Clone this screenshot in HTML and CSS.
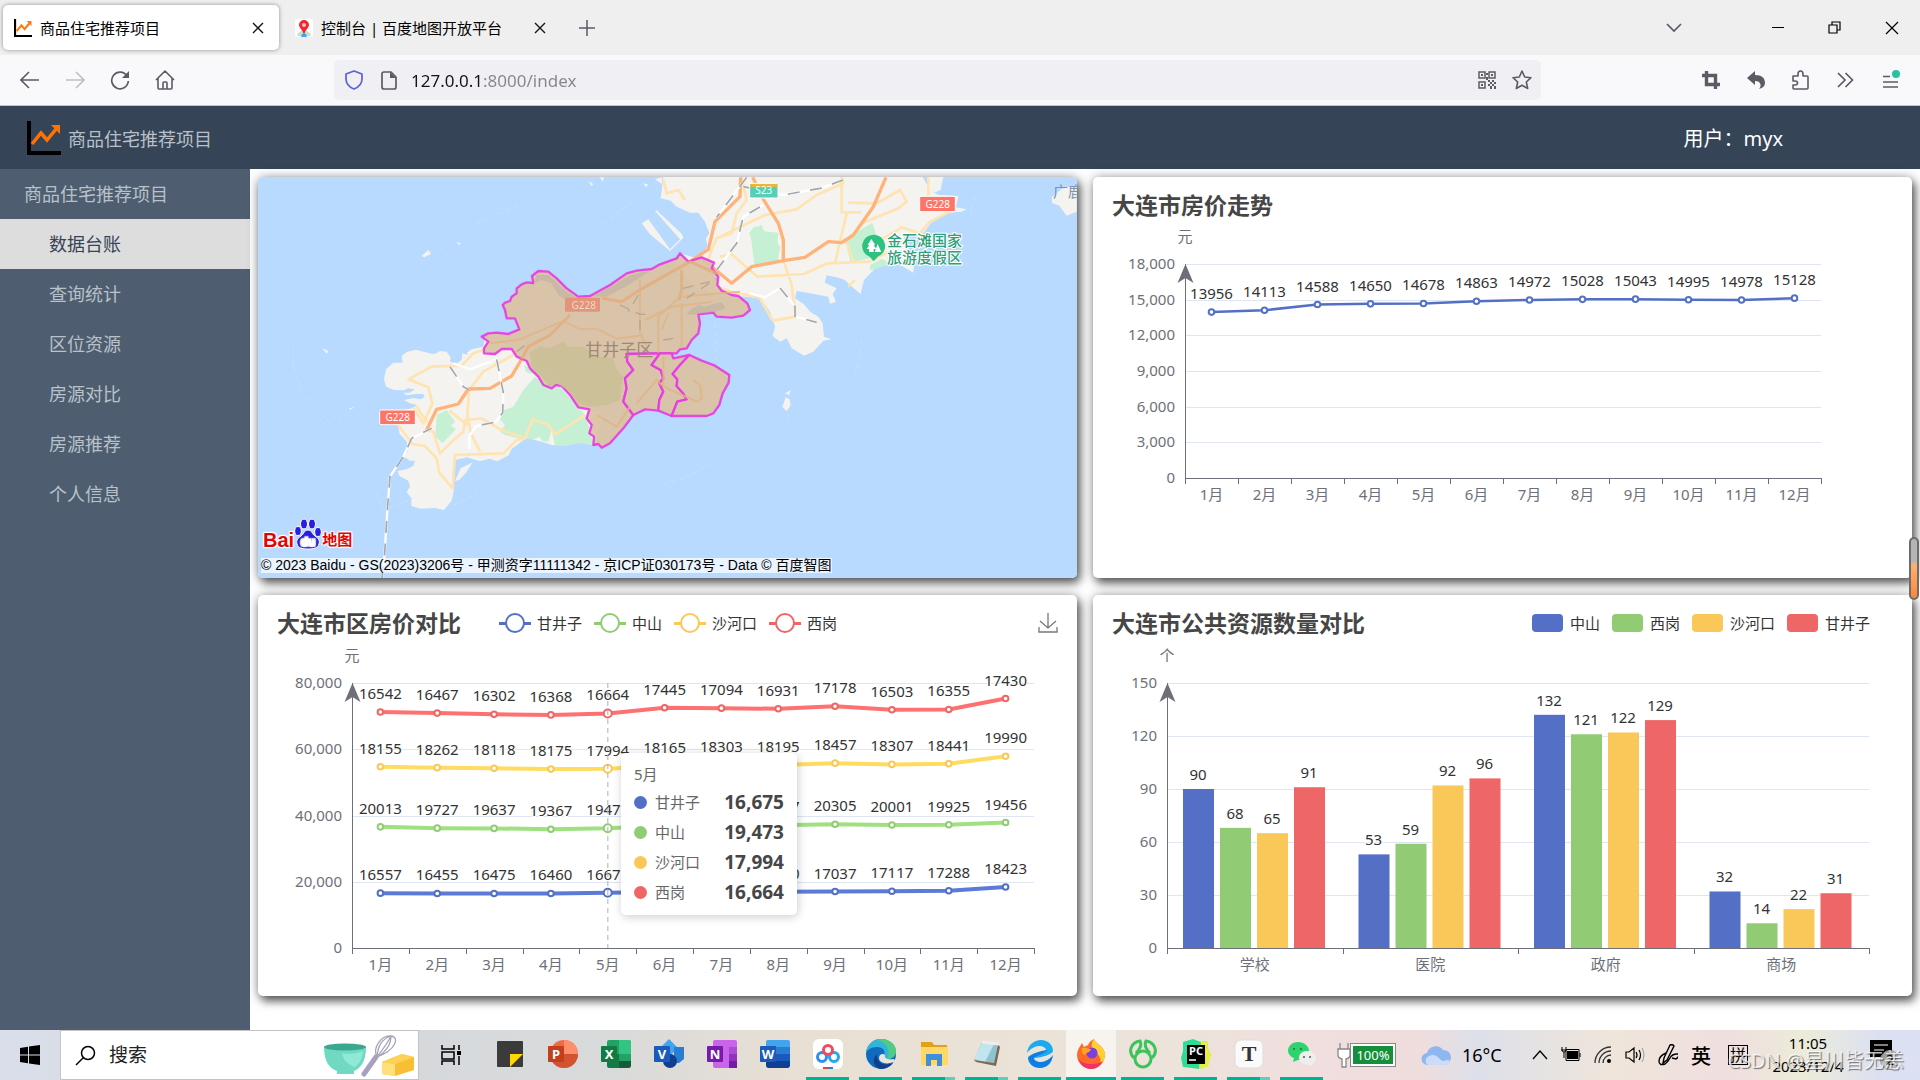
FILE: index.html
```html
<!DOCTYPE html>
<html lang="zh-CN">
<head>
    <meta charset="UTF-8">
    <title>商品住宅推荐项目</title>
    <link rel="stylesheet" href="styles.css">
</head>
<body>
<!-- 浏览器标签栏 -->
<div class="tabs">
    <div class="tab active">
        <svg class="favicon" viewBox="0 0 34 34"><path d="M2 0v32h32" fill="none" stroke="#000" stroke-width="4"/><path d="M5 23L14 12l6 7L30 7" fill="none" stroke="#ff7a0c" stroke-width="4"/><path d="M24 4h9v9z" fill="#ff7a0c"/></svg>
        <span class="tab-title">商品住宅推荐项目</span>
        <button class="tab-close" aria-label="关闭"><svg width="12" height="12" viewBox="0 0 12 12"><path d="M1 1l10 10M11 1L1 11" stroke="#15141a" stroke-width="1.4"/></svg></button>
    </div>
    <div class="tab">
        <svg class="favicon" viewBox="0 0 18 18"><rect width="18" height="18" rx="4" fill="#fff"/><path d="M2 15l4-3h6l4 3-1 2H3z" fill="#bfe3c8"/><path d="M7 15h4l1 3H6z" fill="#4aa3f0"/><path d="M9 1a5 5 0 0 1 5 5c0 3-4 5-4.500 9h-1C8 11 4 9 4 6a5 5 0 0 1 5-5z" fill="#f0282d"/><circle cx="9" cy="6" r="2" fill="#fff" opacity=".7"/></svg>
        <span class="tab-title">控制台 | 百度地图开放平台</span>
        <button class="tab-close" aria-label="关闭"><svg width="12" height="12" viewBox="0 0 12 12"><path d="M1 1l10 10M11 1L1 11" stroke="#15141a" stroke-width="1.4"/></svg></button>
    </div>
    <button class="tab-add" aria-label="新标签页"><svg width="16" height="16" viewBox="0 0 16 16"><path d="M8 0v16M0 8h16" stroke="#5b5b66" stroke-width="1.5"/></svg></button>
    <button class="tab-list" aria-label="所有标签页"><svg width="16" height="10" viewBox="0 0 16 10"><path d="M1 1l7 7 7-7" fill="none" stroke="#5b5b66" stroke-width="1.7"/></svg></button>
    <button class="win-btn" aria-label="最小化"><svg width="12" height="12" viewBox="0 0 12 12"><path d="M0 5.500h12" stroke="#000"/></svg></button>
    <button class="win-btn" aria-label="还原"><svg width="13" height="13" viewBox="0 0 13 13"><path d="M1 4h8v8H1zM4 4V1h8v8H9" fill="none" stroke="#000" stroke-width="1.2"/></svg></button>
    <button class="win-btn" aria-label="关闭窗口"><svg width="14" height="14" viewBox="0 0 14 14"><path d="M1 1l12 12M13 1L1 13" stroke="#000" stroke-width="1.2"/></svg></button>
</div>

<!-- 地址栏 -->
<div class="toolbar">
    <div class="nav-btns">
        <button aria-label="后退"><svg width="20" height="20" viewBox="0 0 20 20"><path d="M19 10H2M9 2l-8 8 8 8" fill="none" stroke="#5b5b66" stroke-width="1.6"/></svg></button>
        <button aria-label="前进"><svg width="20" height="20" viewBox="0 0 20 20"><path d="M1 10h17M11 2l8 8-8 8" fill="none" stroke="#bfbfc5" stroke-width="1.6"/></svg></button>
        <button aria-label="刷新"><svg width="20" height="20" viewBox="0 0 20 20"><path d="M17 6A8.300 8.300 0 1 0 18.300 11" fill="none" stroke="#5b5b66" stroke-width="1.7"/><path d="M19 1v7h-7z" fill="#5b5b66"/></svg></button>
        <button aria-label="主页"><svg width="20" height="20" viewBox="0 0 20 20"><path d="M1 10l9-9 9 9M3 8.500V18q0 1 1 1h12q1 0 1-1V8.500M8 19v-6q0-1 1-1h2q1 0 1 1v6" fill="none" stroke="#5b5b66" stroke-width="1.6" stroke-linejoin="round"/></svg></button>
    </div>
    <div class="url-bar">
        <svg width="18" height="20" viewBox="0 0 18 20"><path d="M9 1l8 3v5c0 5-3 8-8 10-5-2-8-5-8-10V4z" fill="none" stroke="#5a5fdc" stroke-width="1.7" stroke-linejoin="round"/></svg>
        <svg class="doc" width="16" height="19" viewBox="0 0 16 19"><path d="M3 1h7l5 5v10q0 2-2 2H3q-2 0-2-2V3q0-2 2-2z" fill="none" stroke="#5b5b66" stroke-width="1.7"/><path d="M9 1v6h6z" fill="#5b5b66"/></svg>
        <input class="url" type="text" aria-label="地址" value="127.0.0.1:8000/index">
        <svg class="qr" width="18" height="18" viewBox="0 0 18 18"><g fill="none" stroke="#5b5b66" stroke-width="1.5"><path d="M1 1h6v6H1zM11 1h6v6h-6zM1 11h6v6H1z"/></g><path d="M3 3h2v2H3zM13 3h2v2h-2zM3 13h2v2H3zM10 9h2v2h-2zM14 9h2v2h-2zM12 11h2v2h-2zM16 11h2v2h-2zM10 13h2v2h-2zM14 13h2v2h-2zM12 15h2v3h-2zM16 15h2v3h-2zM8 2h2v2H8zM8 6h2v3H8z" fill="#5b5b66"/></svg>
        <svg width="20" height="20" viewBox="0 0 20 20"><path d="M10 1l2.700 6 6.300.700-4.700 4.300 1.400 6.500L10 15.200 4.300 18.500l1.400-6.500L1 7.700 7.300 7z" fill="none" stroke="#5b5b66" stroke-width="1.600" stroke-linejoin="round"/></svg>
    </div>
    <div class="tool-btns">
        <button aria-label="截图"><svg width="18" height="18" viewBox="0 0 18 18"><path d="M4.500 0v13.500H18M0 4.500h13.500V18" fill="none" stroke="#5b5b66" stroke-width="3.400"/></svg></button>
        <button aria-label="撤销"><svg width="18" height="18" viewBox="0 0 18 18"><path d="M0 7l8-7v4c7 0 10 3 10 8 0 3-2 5-6 6 3-3 2-8-4-8v4z" fill="#5b5b66"/></svg></button>
        <button aria-label="扩展"><svg width="19" height="20" viewBox="0 0 19 20"><path d="M2 6h5V4q0-3 2.500-3T12 4v2h4q1 0 1 1v11q0 1-1 1H3q-1 0-1-1v-3h2q2.500 0 2.500-2T4 11H2V7q0-1 1-1z" fill="none" stroke="#5b5b66" stroke-width="1.600" stroke-linejoin="round"/></svg></button>
        <button aria-label="更多工具"><svg width="17" height="16" viewBox="0 0 17 16"><path d="M1 1l7 7-7 7M8.500 1l7 7-7 7" fill="none" stroke="#5b5b66" stroke-width="1.700"/></svg></button>
        <button aria-label="菜单"><svg width="18" height="20" viewBox="0 0 18 20"><path d="M1 6.500h7M1 12h15M1 17h15" stroke="#5b5b66" stroke-width="1.500"/><circle cx="14" cy="4" r="4" fill="#26c2a1"/></svg></button>
    </div>
</div>

<!-- 页面头部 -->
<header class="header">
    <svg class="logo" viewBox="0 0 34 34"><path d="M2 0v32h32" fill="none" stroke="#000" stroke-width="4"/><path d="M5 23L14 12l6 7L30 7" fill="none" stroke="#ff7300" stroke-width="3.500"/><path d="M24 4h9v9z" fill="#ff7300"/></svg>
    <span class="logo-text">商品住宅推荐项目</span>
    <span class="user">用户：myx</span>
</header>

<div class="container">
    <nav class="side">
        <div class="side-title">商品住宅推荐项目</div>
        <ul>
            <li><a class="current" href="#">数据台账</a></li>
            <li><a href="#">查询统计</a></li>
            <li><a href="#">区位资源</a></li>
            <li><a href="#">房源对比</a></li>
            <li><a href="#">房源推荐</a></li>
            <li><a href="#">个人信息</a></li>
        </ul>
    </nav>

    <main class="main">
        <!-- 地图 -->
        <section class="card map">
            <svg class="map-svg" viewBox="24 21 2457 1203" preserveAspectRatio="xMidYMid slice">
                <rect x="24" y="21" width="2457" height="1203" fill="#b8daff"/>
                <!-- 陆地 -->
                <g fill="#f4f3f0">
                    <path d="M705 500L700 530 665 538 650 548 655 555 637 550 635 570 618 582 600 575 602 562 590 545 570 543 552 553 520 545 498 539 470 546 455 558 458 578 430 578 408 598 402 628 408 650 432 660 462 661 475 655 495 658 478 668 460 668 470 676 500 672 520 672 524 680 512 688 490 684 462 690 480 700 502 706 480 716 452 722 442 740 448 790 470 815 475 840 462 860 480 872 495 872 490 888 470 898 443 903 448 918 475 932 480 950 470 965 484 985 484 1008 510 1016 555 1014 582 1020 605 992 612 960 608 915 616 870 650 862 690 874 718 866 742 874 776 856 784 838 830 803 875 815 908 826 950 822 1000 818 1030 826 1060 740 840 560 790 530z"/>
                    <path d="M615 932L632 895 668 877 650 905 628 930z"/>
                    <path d="M1240 21L1232 85 1262 92 1280 110 1320 128 1345 128 1365 155 1378 190 1368 205 1372 230 1340 265 1290 250 1270 300 1400 380 1460 378 1530 384 1560 425 1575 470 1568 498 1590 515 1610 505 1625 535 1662 557 1690 545 1720 512 1745 508 1722 500 1718 460 1705 440 1680 425 1662 403 1635 385 1640 363 1680 370 1735 380 1740 402 1758 395 1748 372 1760 355 1724 338 1730 316 1760 322 1785 330 1800 345 1832 372 1842 330 1866 305 1890 280 1950 284 1990 308 1992 284 1970 260 1960 190 2020 190 2042 160 2090 128 2135 125 2150 118 2118 112 2125 78 2065 75 2040 60 2018 21z"/>
                    <path d="M2035 21h45l-8 38-15 8-25-6z"/>
                    <path d="M1175 160l20-12 65 90 30-30-75-85 5-2 75 70 5 12-40 40-60-50z"/>
                    <path d="M2405 82l30-25 45-12v80l-30 12-22-30-22-8zM515 258l20-18 8 12-20 10zM217 535l18 8-5 8zM297 715l18-4-14 8zM1597 710l10-28 12 6 3 18-12 18zM1605 670l18-10-6 16zM1016 34l14 8-6 6zM1050 22h12l-4 14zM1180 40l15 4-8 8zM1215 28l22-6-2 20zM620 215l14 6-8 4z"/>
                </g>
                <!-- 绿地 -->
                <g fill="#c6f0d3">
                    <path d="M855 620L905 655 930 650 985 712 1010 740 1030 825 985 818 950 828 915 826 905 780 895 815 875 812 870 800 850 808 800 803 765 795 750 785 765 765 750 748 758 722 790 710 820 660z"/>
                    <path d="M822 585l32 15 6 15-32-8zM560 735l30-15 25 35-12 12 15 10-40 42-22-20z"/>
                    <path d="M1498 190l12-18 25-6 8 18 42 4-2 30 8 15-8 40-35 5-35 8-8-70zM1785 208l82-50 15 45-15 60-65 14z"/>
                    <path d="M1860 285l35-18 30 15-30 8-35 12z"/>
                </g>
                <!-- 普通道路 -->
                <g fill="none" stroke="#ffe3b0" stroke-width="8" stroke-linejoin="round">
                    <path d="M700 540L670 550 635 587 545 590 475 628 535 652 547 700 520 760 490 712M445 765L487 822 525 828 560 865 568 908 608 955 615 855 760 850 800 810 825 805 848 748 895 765 915 793 1005 735M690 845L663 790 652 740 657 660 700 605 790 555M598 722L652 765M530 780l20 5 20 65 30-30 40-35 5-35 50-5 60 35 60 20M500 710l30 45"/>
                    <path d="M1475 22L1490 90 1460 130 1445 190 1400 205 1385 240 1375 270M1240 30l10 40 35-10 20 30M1400 205L1545 135 1640 118 1700 75 1780 40 1775 22M1775 22v105h60M1790 130l-20 85-15 65M1795 98l85 2 70-40 20 35-25 20-110 45M1790 215l20 60M1442 250l80 70 140-8 70-32 125-5 60-30M1600 270l25 75 8 65 5 30-70 12-40-70-80-15-40-15M2035 22v55M1950 170l60 20 30-35 60-30M1900 205l60-35M1410 260l30-5M1815 330l-20 20"/>
                </g>
                <!-- 国道 -->
                <g fill="none" stroke="#ffb27a" stroke-width="10" stroke-linejoin="round">
                    <path d="M530 780L560 718 625 702 655 657 720 655 785 618 815 567M1315 278L1375 238 1395 155 1470 80 1472 22M1508 22L1540 88 1585 160 1600 210 1600 270M1355 265L1445 340 1505 290 1600 272 1665 262 1735 215 1775 218 1810 195 1870 110 1908 22"/>
                </g>
                <!-- 铁路 -->
                <g fill="none" stroke="#fff" stroke-width="7"><path d="M396 1224L404 1150 412 1020 420 920 460 860 485 805 545 775M600 590L640 650 657 660M610 580l50 18 80-30 20 100-2 60-20 28-60 12-20 30v40M1400 300l60-80 20-80 60-35M1490 22l-90 120M1480 50l120 25 110-20 70-25M1500 370l45 12 45-28 45 55v30l65 18"/></g>
                <g fill="none" stroke="#a3a8ad" stroke-width="5" stroke-dasharray="36 32"><path d="M396 1224L404 1150 412 1020 420 920 460 860 485 805 545 775M600 590L640 650 657 660M740 568l20 100-2 60-20 28-60 12M1400 300l60-80 20-80 60-35M1490 22l-90 120M1480 50l120 25 110-20 70-25M1590 354l45 55v30l65 18"/></g>
                <g fill="none" stroke="#cde3fb" stroke-width="2" stroke-dasharray="14 10"><path d="M130 520v70l25 80 95 100 60-60M680 160l140-60M1060 160l90-65M1835 510l-5 60-20 60M2160 140l18-70M1395 460l5 120M1240 942l70-20 85-50M380 970l20 50 90-35M610 1005l80-38M1616 730v30M545 245l30 20 50-40"/></g>
                <!-- 行政区 -->
                <g class="district">
                    <path d="M695 500L715 490 740 488 775 492 808 478 795 445 770 445 765 420 758 405 765 398 780 393 785 380 800 370 800 355 815 343 830 337 850 339 846 318 865 303 895 305 920 325 950 355 985 380 1020 378 1080 345 1130 310 1160 302 1205 297 1230 283 1280 265 1290 250 1315 275 1355 262 1392 278 1385 295 1405 320 1402 345 1415 362 1445 375 1465 378 1492 400 1500 420 1480 437 1445 443 1400 440 1390 428 1345 433 1350 460 1345 490 1325 510 1310 535 1290 538 1280 550 1230 550 1130 552 1132 575 1150 600 1125 625 1130 655 1120 695 1150 735 1120 775 1080 820 1055 833 1045 822 1030 825 1032 800 1018 790 1025 765 1010 745 1018 718 985 712 960 675 935 648 918 645 905 655 880 645 865 620 840 595 830 573 800 560 785 537 755 537 735 552 702 550 702 535 715 515z"/>
                    <path d="M1130 552L1230 550 1205 585 1232 600 1240 625 1228 640 1240 665 1228 690 1225 722 1185 718 1150 735 1120 695 1130 655 1125 625 1150 600 1132 575z"/>
                    <path d="M1230 550L1265 550 1270 565 1318 555 1290 585 1268 612 1282 628 1280 648 1298 668 1310 688 1282 695 1265 738 1225 722 1228 690 1240 665 1228 640 1240 625 1232 600 1205 585z"/>
                    <path d="M1318 555L1355 572 1395 587 1438 615 1436 638 1418 670 1408 705 1390 730 1370 738 1265 738 1282 695 1310 688 1298 668 1280 648 1282 628 1268 612 1290 585z"/>
                </g>
                <g fill="#c8bf93" opacity=".8"><path d="M840 548L870 528 900 535 940 515 955 530 1000 530 1040 560 1090 565 1100 600 1118 620 1110 690 1070 705 1020 710 985 700 960 665 920 640 900 650 870 615 845 590z"/></g>
                <g fill="#bcb0a4" opacity=".6"><path d="M852 340l8-25 35 0 60 55 35 17 25-2-20 8-35 4-35-22-20-35-30-10zM1030 378l60-32 50-30 60-14-60 40-70 38zM1310 435l10-15 25-15 20 5 25-8 25-5 12 18-30 10-50 6z"/></g>
                <g fill="none" stroke="#e2ac7c" stroke-width="9" opacity=".8"><path d="M815 567L835 530 900 495 960 435M1055 385L1115 395 1160 365 1230 325 1320 275 1400 310M1295 300v60l-8 30"/></g>
                <g fill="none" stroke="#dfb582" stroke-width="6" opacity=".8"><path d="M720 520l90-12 130-55 50 25 50-2 60 30 80-10M1225 548V440l65-60 180-15M1235 480l20-50M1170 330v160l20 40M1185 450l80-40 120-15M1295 400v130M1160 700l60-70 15 15M1240 560v90l100 45 15-10-5-40-20-15M1040 735l60 35 40-60"/></g>
                <g fill="none" stroke="#b39d88" stroke-width="4" stroke-dasharray="30 22" opacity=".8"><path d="M1165 375l-30 50M1110 405l60 28 30 0M1300 355l80-20M1310 385l90-60M800 545l35-28M1170 450v40M1240 510l30-5"/></g>
                <!-- 标注 -->
                <g class="road-sign">
                    <rect x="389" y="720" width="107" height="44" rx="4" fill="#ff7468" stroke="#fff" stroke-width="3"/>
                    <text x="443" y="754">G228</text>
                    <rect x="945" y="383" width="105" height="42" rx="4" fill="#e2957a"/>
                    <text x="1001" y="416" opacity=".6">G228</text>
                    <rect x="2009" y="79" width="107" height="46" rx="4" fill="#ff7468" stroke="#fff" stroke-width="3"/>
                    <text x="2063" y="114">G228</text>
                    <rect x="1499" y="40" width="85" height="44" rx="4" fill="#55cfb5" stroke="#fff" stroke-width="3"/>
                    <path d="M1501 42h81v9h-81z" fill="#e8b935"/>
                    <text x="1541" y="73">S23</text>
                </g>
                <text class="district-name" x="1108" y="557">甘井子区</text>
                <path d="M1871 194a34 34 0 0 1 12 66l-12 14-12-14a34 34 0 0 1 12-66z" fill="#2cc27f"/>
                <path d="M1864 207l12 18h-5l8 12h-8v9h-14v-9h-7l8-12h-5zM1883 222l11 24h-20z" fill="#fff"/>
                <g class="scenic"><text x="1911" y="229">金石滩国家</text><text x="1911" y="278">旅游度假区</text></g>
                <text class="island" x="2409" y="81">广鹿</text>
            </svg>
            <div class="baidu">
                <span>Bai</span>
                <svg width="28" height="32" viewBox="0 0 28 32"><g fill="#2a1ee0" stroke="#fff" stroke-width="1"><ellipse cx="10" cy="6" rx="3.500" ry="5"/><ellipse cx="18" cy="6" rx="3.500" ry="5"/><ellipse cx="4" cy="13" rx="3.300" ry="4.500"/><ellipse cx="24" cy="14" rx="3.300" ry="4.500"/><path d="M14 12c4 0 4 4 7 6s5 4 4 8-5 5-11 5-10-1-11-5 1-6 4-8 3-6 7-6z"/></g><text x="14" y="28" class="du">du</text></svg>
                <span class="baidu-cn">地图</span>
            </div>
            <div class="copyright">© 2023 Baidu - GS(2023)3206号 - 甲测资字11111342 - 京ICP证030173号 - Data © 百度智图</div>
        </section>

        <!-- 房价走势 -->
        <section class="card">
            <div class="card-head"><h3>大连市房价走势</h3></div>
            <div class="chart" id="trend"></div>
        </section>

        <!-- 区房价对比 -->
        <section class="card">
            <div class="card-head">
                <h3>大连市区房价对比</h3>
                <ul class="legend line">
                    <li class="c1"><i></i>甘井子</li>
                    <li class="c2"><i></i>中山</li>
                    <li class="c3"><i></i>沙河口</li>
                    <li class="c4"><i></i>西岗</li>
                </ul>
                <button class="save" aria-label="保存为图片"><svg width="20" height="22" viewBox="0 0 20 22"><path d="M10 1v15M2 9l8 7 8-7M1 15v5h18v-5" fill="none" stroke="#777" stroke-width="1.300"/></svg></button>
            </div>
            <div class="chart" id="compare">
                <div class="tooltip">
                    <p>5月</p>
                    <ul>
                        <li class="c1"><i></i>甘井子<b>16,675</b></li>
                        <li class="c2"><i></i>中山<b>19,473</b></li>
                        <li class="c3"><i></i>沙河口<b>17,994</b></li>
                        <li class="c4"><i></i>西岗<b>16,664</b></li>
                    </ul>
                </div>
            </div>
        </section>

        <!-- 公共资源 -->
        <section class="card">
            <div class="card-head">
                <h3>大连市公共资源数量对比</h3>
                <ul class="legend block">
                    <li class="c1"><i></i>中山</li>
                    <li class="c2"><i></i>西岗</li>
                    <li class="c3"><i></i>沙河口</li>
                    <li class="c4"><i></i>甘井子</li>
                </ul>
            </div>
            <div class="chart" id="resource"></div>
        </section>
    </main>
    <div class="thumb"></div>
</div>

<!-- 任务栏 -->
<footer class="taskbar">
    <button class="start" aria-label="开始"><svg width="20" height="20" viewBox="0 0 20 20"><path d="M0 3l8-1.200V9.500H0zM9 1.600L20 0v9.500H9zM0 10.500h8v7.700L0 17zM9 10.500h11V20L9 18.400z"/></svg></button>
    <div class="search">
        <svg width="21" height="21" viewBox="0 0 21 21"><circle cx="13" cy="8" r="6.500" fill="none" stroke="#000" stroke-width="1.500"/><path d="M8.500 12.500L1 20" stroke="#000" stroke-width="1.500"/></svg>
        <input type="text" aria-label="搜索" placeholder="搜索">
        <svg width="94" height="44" viewBox="0 0 94 44">
            <path d="M2 14h42c0 14-5 21-12 24v3H15v-3C7 35 2 28 2 14z" fill="#6fd9c1"/><ellipse cx="23" cy="14" rx="21" ry="3.500" fill="#3aa78f"/><path d="M20 20c8 2 16 0 21-2-1 9-4 13-8 16-6-2-12-6-13-14z" fill="#9cf0dc" opacity=".7"/>
            <path d="M42 41l12-17" stroke="#a79fc4" stroke-width="5" stroke-linecap="round"/><path d="M55 24C50 14 60 2 69 3s5 14-14 21zM55 24C56 12 60 6 69 3M55 24C62 15 66 9 69 3M55 24c8-4 14-12 14-21" fill="none" stroke="#a8a5b8" stroke-width="1.300"/>
            <path d="M60 29l20-8 12 3v13l-19 6-13-2z" fill="#f8bf35"/><path d="M60 29l13 2v12l-13-2z" fill="#ffe07a"/><path d="M60 29l20-8 12 3-19 7z" fill="#ffd257"/>
        </svg>
    </div>
    <button class="task-view" aria-label="任务视图"><svg width="20" height="20" viewBox="0 0 20 20"><path d="M1 0v4h12V0M1 7h12v7H1zM1 20v-4h12v4M18 0v5M18 11v9" fill="none" stroke="#000" stroke-width="1.500"/><path d="M16 6h4v4h-4z"/></svg></button>
    <div class="apps">
        <button aria-label="便笺"><svg viewBox="0 0 30 30"><rect x="2" y="2" width="26" height="26" rx="1" fill="#3b3b3b"/><path d="M15 28V15h13z" fill="#ffd800"/></svg></button>
        <button aria-label="PowerPoint"><svg viewBox="0 0 30 30"><circle cx="16" cy="15" r="14" fill="#ed6c47"/><path d="M16 1a14 14 0 0 1 14 14H16z" fill="#ff8f6b"/><path d="M2 15h28a14 14 0 0 1-28 0z" fill="#d35230"/><rect y="7" width="16" height="16" rx="1" fill="#c43e1c"/><text x="8" y="20">P</text></svg></button>
        <button aria-label="Excel"><svg viewBox="0 0 30 30"><rect x="6" y="1" width="24" height="28" rx="2" fill="#21a366"/><path d="M18 1h10l2 2v12H18z" fill="#33c481"/><path d="M6 15h12v14H8l-2-2z" fill="#107c41"/><path d="M18 22h12v5l-2 2H18z" fill="#185c37"/><rect y="7" width="16" height="16" rx="1" fill="#107c41"/><text x="8" y="20">X</text></svg></button>
        <button aria-label="Visio"><svg viewBox="0 0 30 30"><path d="M15 0l9 9-9 9-9-9z" fill="#41a5ee"/><path d="M20 8h10v12l-5 4h-5z" fill="#2b7cd3"/><circle cx="16" cy="22" r="7" fill="#103f91"/><rect y="7" width="16" height="16" rx="1" fill="#185abd"/><text x="8" y="20">V</text></svg></button>
        <button aria-label="OneNote"><svg viewBox="0 0 30 30"><rect x="6" y="1" width="24" height="28" rx="2" fill="#ca64ea"/><path d="M22 8h8v7h-8z" fill="#ae4bd5"/><path d="M22 15h8v7h-8z" fill="#9332bf"/><path d="M22 22h8v7h-8z" fill="#7719aa"/><rect y="7" width="16" height="16" rx="1" fill="#7719aa"/><text x="8" y="20">N</text></svg></button>
        <button aria-label="Word"><svg viewBox="0 0 30 30"><rect x="6" y="1" width="24" height="28" rx="2" fill="#41a5ee"/><path d="M6 8h24v7H6z" fill="#2b7cd3"/><path d="M6 15h24v7H6z" fill="#185abd"/><path d="M6 22h24v5l-2 2H8l-2-2z" fill="#103f91"/><rect y="7" width="16" height="16" rx="1" fill="#185abd"/><text x="8" y="20">W</text></svg></button>
        <button class="open" aria-label="百度网盘"><svg viewBox="0 0 30 30"><rect width="30" height="30" rx="6" fill="#fff"/><g fill="none" stroke-width="3"><circle cx="9" cy="18" r="4.500" stroke="#2f8ef5"/><circle cx="21" cy="18" r="4.500" stroke="#22a7f5"/><circle cx="15" cy="11" r="4.500" stroke="#ef4b5b"/></g><path d="M10 28h5v2h-5z" fill="#e43"/><path d="M15 28h5v2h-5z" fill="#28c"/></svg></button>
        <button class="open" aria-label="Edge"><svg viewBox="0 0 30 30"><circle cx="15" cy="15" r="15" fill="#0f6cbd"/><path d="M0 14C1 5 8 0 15 0c9 0 15 6 15 12 0 5-4 8-8 8s-5-2-4-4c2-4-1-8-7-8S1 11 0 14z" fill="#2fb5e0"/><path d="M15 0c9 0 15 6 15 12 0 5-4 8-8 8 2-8 0-17-12-19z" fill="#5bd06a" opacity=".8"/><path d="M11 15c-1 8 6 13 16 9-4 5-9 6-13 6-6-2-9-9-3-15z" fill="#123f8c"/><path d="M19 16c-2-2-6-1-6 3 0 5 8 7 14 4l3 1-2-4c-5 1-10 0-9-4z" fill="#ece4da"/></svg></button>
        <button class="open more" aria-label="文件资源管理器"><svg viewBox="0 0 30 30"><path d="M2 3h11l2 3h13v20H2z" fill="#e1a21b"/><path d="M2 8h27v18H2z" fill="#ffd867"/><path d="M7 27V15h16v12h-5v-6h-6v6z" fill="#3f8fdc"/></svg></button>
        <button class="open more" aria-label="记事本"><svg viewBox="0 0 30 30"><path d="M10 3l16 1-4 21-20-4z" fill="#8fc3d2"/><path d="M10 4l12 1-9 18-11-3z" fill="#c2e4ec"/><path d="M26 5l2 3-4 19-20-4-2-2 20 3z" fill="#7b6b52"/><path d="M10 3l17 2" stroke="#eee" stroke-width="3"/></svg></button>
        <button class="open" aria-label="浏览器"><svg viewBox="0 0 30 30"><path d="M2 14C3 6 9 1 16 1s12 5 12 11c0 3-12 7-19 7 0-3 12-6 12-8s-3-4-7-4-9 3-12 7z" fill="#19aaf2"/><path d="M28 16c-1 8-6 13-13 13S3 24 3 19c0-3 11-7 19-8 0 3-12 6-13 8 0 2 3 4 7 4s9-3 12-7z" fill="#0b7fe8"/></svg></button>
        <button class="open active" aria-label="Firefox"><svg viewBox="0 0 30 30"><path d="M3 9l3-5 2 4 4-2c1-3 4-5 6-6 0 4 10 6 11 15 0 8-6 15-14 15S1 23 1 16c0-3 1-5 2-7z" fill="#ff6a2b"/><path d="M18 0c0 4 10 6 11 15 0 4-2 9-5 11 3-9-5-13-8-16-1-4 0-8 2-10z" fill="#ffcf33"/><path d="M2 19c2 7 8 11 13 11 6 0 10-4 12-8-5 4-21 5-25-3z" fill="#f4306a"/><circle cx="16" cy="14" r="5.500" fill="#7b3fe0"/><path d="M6 9c4-1 6 1 9 1-1 4-5 3-6 6-3-1-4-4-3-7z" fill="#ffa51f"/></svg></button>
        <button class="open" aria-label="Navicat"><svg viewBox="0 0 30 30"><g fill="none" stroke="#3cc45a" stroke-width="3"><ellipse cx="15" cy="20" rx="8" ry="8"/><path d="M6 19C-1 12 4 3 12 2c2 4 0 8-4 12M24 19c7-7 2-16-6-17-2 4 0 8 4 12"/></g></svg></button>
        <button class="open" aria-label="PyCharm"><svg viewBox="0 0 30 30"><path d="M2 3l10-3 8 3 6-1 1 8 3 6-3 4v7l-9 3-7-1-9-1-2-9 2-7z" fill="#2fdc96"/><path d="M20 3l6-1 1 8 3 5-3 13-9 2z" fill="#e8ee42"/><rect x="6" y="6" width="18" height="19" fill="#000"/><text class="pc" x="15" y="16">PC</text><path d="M8 21h7" stroke="#fff" stroke-width="1.500"/></svg></button>
        <button class="open more" aria-label="Typora"><svg viewBox="0 0 30 30"><rect x="1" y="1" width="28" height="28" rx="6" fill="#fafafa" stroke="#ddd"/><text class="ty" x="15" y="22">T</text></svg></button>
        <button class="open" aria-label="微信"><svg viewBox="0 0 30 30"><path d="M11 3c6 0 11 4 11 9s-5 9-11 9l-5 2 1-4c-3-1-6-4-6-7 0-5 4-9 10-9z" fill="#2bd46d"/><path d="M20 12c5 0 9 3 9 7 0 3-2 5-4 6l1 3-4-2c-6 0-10-3-10-7s3-7 8-7z" fill="#eee"/><g fill="#555"><circle cx="17" cy="18" r="1"/><circle cx="23" cy="18" r="1"/><circle cx="7" cy="10" r="1"/><circle cx="14" cy="10" r="1"/></g></svg></button>
    </div>
    <div class="power">
        <svg width="14" height="26" viewBox="0 0 14 26"><path d="M3 1v6M11 1v6M1 7h12v6q0 3-4 4v8H5v-8q-4-1-4-4z" fill="#fff" stroke="#888" stroke-width="1.300"/></svg>
        <span class="percent">100%</span>
    </div>
    <div class="weather">
        <svg width="30" height="24" viewBox="0 0 30 24"><path d="M7 22a6 6 0 0 1-1-12A9 9 0 0 1 22 7a7.500 7.500 0 0 1 1 15z" fill="#8db7ee"/><path d="M7 22a5 5 0 0 1 1-9c6-3 9 1 12 4s5-2 9 1c-1 3-3 4-6 4z" fill="#c9dcf8"/></svg>
        <span>16°C</span>
    </div>
    <div class="tray">
        <svg width="16" height="20" viewBox="0 0 16 20"><path d="M1 14l7-8 7 8" fill="none" stroke="#000" stroke-width="1.300"/></svg>
        <svg width="20" height="20" viewBox="0 0 20 20"><path d="M6 6h11v8H6z"/><path d="M5 4.500h13v11H5zM19 8v4M0 5h6M1 2v3q0 2 2 2t2-2V2M3 7v6" fill="none" stroke="#000"/></svg>
        <svg width="18" height="18" viewBox="0 0 18 18"><g fill="none" stroke="#333" stroke-width="1.300"><path d="M1 17A16 16 0 0 1 17 1M5 17A12 12 0 0 1 17 5M9 17A8 8 0 0 1 17 9"/></g><circle cx="15" cy="15" r="2"/></svg>
        <svg width="20" height="18" viewBox="0 0 20 18"><path d="M1 6h3l5-4v14l-5-4H1zM11 6q2 3 0 6M14 4q3 5 0 10" fill="none" stroke="#000" stroke-width="1.200"/><path d="M17 2q4 7 0 14" fill="none" stroke="#999"/></svg>
        <svg width="20" height="22" viewBox="0 0 20 22"><path d="M12 1q3-1 4 1L9 16l-4 3 1-5zM8 9q-7 3-7 8t6 3q3-2 5-6t7-4-1 5l-4-1" fill="none" stroke="#000" stroke-width="1.400"/></svg>
    </div>
    <span class="lang">英</span>
    <span class="ime">拼</span>
    <div class="clock"><span>11:05</span><span>2023/12/4</span></div>
    <div class="notice">
        <svg width="28" height="32" viewBox="0 0 28 32"><path d="M0 1h22v17h-5l-5 5v-5H0z"/><path d="M4 6h14M4 11h10" stroke="#fff"/><circle cx="20" cy="21" r="9.500" fill="#bbb" fill-opacity=".85" stroke="#999"/><text x="20" y="26">2</text></svg>
    </div>
    <span class="watermark">CSDN @星川皆无恙</span>
</footer>

<script src="charts.js"></script>
</body>
</html>
```
FILE: styles.css
```css
*{
    margin: 0;
    padding: 0;
    box-sizing: border-box;
}
body{
    display: flex;
    flex-direction: column;
    min-height: 100vh;
    font-family: "Noto Sans", "Noto Sans CJK SC", sans-serif;
    font-size: 15px;
    background-color: #fff;
}
ul{
    list-style: none;
}
a{
    text-decoration: none;
}
button{
    display: flex;
    align-items: center;
    justify-content: center;
    border: none;
    background: none;
    font: inherit;
    cursor: pointer;
}
input{
    border: none;
    outline: none;
    background: none;
    font: inherit;
}
svg{
    display: block;
    flex-shrink: 0;
}
/* 标签栏 */
.tabs{
    display: flex;
    align-items: center;
    height: 55px;
    padding-left: 3px;
    background-color: #efefef;
}
.tab{
    display: flex;
    align-items: center;
    width: 276px;
    height: 45px;
    padding: 0 15px 0 11px;
    border-radius: 5px;
    color: #000;
}
.tab.active{
    background-color: #fff;
    box-shadow: 0 0 4px rgba(0,0,0,.4);
}
.tab + .tab{
    padding-left: 16px;
    padding-right: 9px;
}
.favicon{
    width: 18px;
    height: 18px;
    margin-right: 8px;
}
.tab-title{
    flex: 1;
    white-space: nowrap;
}
.tab-close{
    width: 12px;
    height: 12px;
}
.tab-add{
    width: 64px;
    height: 45px;
}
.tab-list{
    width: 40px;
    height: 45px;
    margin-left: auto;
    margin-right: 55px;
}
.win-btn{
    width: 57px;
    height: 55px;
}
/* 地址栏 */
.toolbar{
    display: grid;
    grid-template-columns: 334px 1fr 379px;
    align-items: center;
    height: 51px;
    background-color: #f9f9fb;
    border-bottom: 1px solid #c3c3c8;
}
.nav-btns{
    display: flex;
    gap: 1px;
    padding-left: 8px;
}
.nav-btns button{
    width: 44px;
    height: 40px;
}
.url-bar{
    display: flex;
    align-items: center;
    height: 40px;
    padding: 0 9px 0 11px;
    border-radius: 5px;
    background-color: #f0f0f4;
}
.url-bar .doc{
    margin: 0 14px 0 18px;
}
.url{
    flex: 1;
    min-width: 0;
    font-size: 17px;
    color: transparent;
    /* 主机名深色，其余灰色 */
    background: linear-gradient(to right, #15141a 72px, #85848c 72px);
    -webkit-background-clip: text;
    background-clip: text;
}
.url-bar .qr{
    margin-right: 16px;
}
.tool-btns{
    display: flex;
    justify-content: flex-end;
    padding-right: 7px;
}
.tool-btns button{
    width: 45px;
    height: 40px;
}
/* 头部 */
.header{
    display: flex;
    align-items: center;
    height: 63px;
    padding: 0 137px 0 27px;
    background-color: #364457;
    color: #b9c0c9;
    font-size: 18px;
}
.logo{
    width: 34px;
    height: 34px;
    margin-right: 7px;
}
.user{
    margin-left: auto;
    font-size: 20px;
    color: #fff;
}
/* 主体 */
.container{
    position: relative;
    flex: 1;
    display: flex;
}
.side{
    width: 250px;
    flex-shrink: 0;
    background-color: #4e5e70;
    font-size: 18px;
    line-height: 50px;
    color: #b9c1ca;
}
.side-title{
    padding-left: 24px;
}
.side a{
    display: block;
    padding-left: 49px;
    color: #b9c1ca;
}
.side a.current{
    background-color: #ddd;
    color: #364457;
}
.main{
    flex: 1;
    display: grid;
    grid-template-columns: 1fr 1fr;
    align-content: start;
    gap: 17px 16px;
    padding: 8px;
}
.card{
    position: relative;
    min-width: 0;
    border-radius: 5px;
    background-color: #fff;
    box-shadow: 0 0 12px rgba(0,0,0,.3), 3px 5px 10px rgba(0,0,0,.6);
}
.card-head{
    display: flex;
    align-items: center;
    height: 44px;
    padding: 12px 19px 0;
}
.card-head h3{
    font-size: 23px;
    line-height: 32px;
    color: #464646;
    white-space: nowrap;
}
.c1{ --c: #5470c6; }
.c2{ --c: #91cc75; }
.c3{ --c: #fac858; }
.c4{ --c: #ee6666; }
.legend{
    display: flex;
    gap: 12px;
    line-height: 22px;
    color: #333;
    white-space: nowrap;
}
.legend li{
    display: flex;
    align-items: center;
    gap: 6px;
}
.legend.line{
    margin-left: 38px;
}
.legend.block{
    margin-left: auto;
    margin-right: 23px;
}
.legend.line i{
    display: flex;
    align-items: center;
    justify-content: center;
    width: 32px;
    height: 16px;
    background: linear-gradient(var(--c), var(--c)) center / 100% 3px no-repeat;
}
.legend.line i::before{
    content: "";
    width: 16px;
    height: 16px;
    border: 2px solid var(--c);
    border-radius: 50%;
    background-color: #fff;
}
.legend.block li{
    gap: 7px;
}
.legend.block i{
    width: 31px;
    height: 18px;
    border-radius: 4px;
    background-color: var(--c);
}
.save{
    width: 20px;
    height: 22px;
    margin-left: auto;
}
/* 图表 */
.chart{
    position: relative;
}
.chart > svg{
    width: 100%;
    height: auto;
}
.chart text{
    font-size: 15px;
    fill: #6e7079;
    text-anchor: middle;
}
.chart text.y{
    text-anchor: end;
}
.chart text.val{
    fill: #333;
    stroke: #fff;
    stroke-width: 2px;
    paint-order: stroke;
}
.tooltip{
    position: absolute;
    left: 363px;
    top: 114px;
    width: 176px;
    padding: 9px 13px 8px;
    border-radius: 5px;
    background-color: #fff;
    box-shadow: 1px 2px 10px rgba(0,0,0,.2);
    color: #666;
}
.tooltip p{
    line-height: 25px;
}
.tooltip li{
    display: flex;
    align-items: center;
    line-height: 30px;
}
.tooltip i{
    width: 13px;
    height: 13px;
    margin-right: 8px;
    border-radius: 50%;
    background-color: var(--c);
}
.tooltip b{
    margin-left: auto;
    font-size: 19px;
    color: #464646;
}
/* 地图 */
.map{
    overflow: hidden;
}
.map-svg{
    width: 100%;
    height: 401px;
}
.district path{
    fill: #dac2a4;
    fill-opacity: .95;
    stroke: #e838e4;
    stroke-width: 7;
    stroke-opacity: .9;
    stroke-linejoin: round;
}
.road-sign text{
    font-size: 30px;
    fill: #fff;
    text-anchor: middle;
}
.district-name{
    font-size: 51px;
    fill: #9d8975;
    text-anchor: middle;
}
.scenic text{
    font-size: 45px;
    font-weight: 500;
    fill: #2e9f78;
    stroke: #fff;
    stroke-width: 6;
    paint-order: stroke;
}
.island{
    font-size: 45px;
    fill: #7f92b4;
}
.baidu{
    position: absolute;
    left: 5px;
    bottom: 28px;
    display: flex;
    align-items: flex-end;
    font-family: "Liberation Sans", "Noto Sans CJK SC", sans-serif;
    font-size: 20px;
    font-weight: bold;
    line-height: 20px;
    color: #e10602;
    text-shadow: 0 0 2px #fff, 1px 1px 1px #fff, -1px -1px 1px #fff, 1px -1px 1px #fff, -1px 1px 1px #fff;
}
.baidu .du{
    font-size: 12px;
    fill: #fff;
    text-anchor: middle;
}
.baidu-cn{
    font-size: 15px;
}
.copyright{
    position: absolute;
    left: 3px;
    bottom: 5px;
    background-color: rgba(255,255,255,.7);
    font-family: "Liberation Sans", "Noto Sans CJK SC", sans-serif;
    font-size: 14px;
    line-height: 15px;
    color: #000;
    white-space: nowrap;
}
.thumb{
    position: absolute;
    right: 1px;
    top: 368px;
    width: 10px;
    height: 63px;
    border: 2px solid #6c6c6c;
    border-radius: 5px;
    background: linear-gradient(#b5b5b5 38%, #ffb070 44%, #ff8636);
}
/* 任务栏 */
.taskbar{
    position: relative;
    display: flex;
    align-items: center;
    height: 50px;
    background: linear-gradient(to right, #d9deea 0, #d6d9dc 22%, #d9dada 32%, #e9e0d4 42%, #ece4da 60%, #f0dfde 68%, #efdddd 74%, #dde0ea 77%, #efe5da 84%, #efdfdf 90%, #ecebd9 94%, #dbe0f2 98%);
}
.start{
    width: 60px;
    height: 50px;
}
.search{
    display: flex;
    align-items: center;
    width: 359px;
    height: 50px;
    padding: 0 2px 0 14px;
    border: 1px solid #c4c4c4;
    background-color: #fff;
}
.search input{
    flex: 1;
    min-width: 0;
    margin-left: 13px;
    font-size: 19px;
}
.search input::placeholder{
    color: #222;
}
.task-view{
    width: 64px;
    height: 50px;
}
.apps{
    display: flex;
}
.apps button{
    position: relative;
    width: 53px;
    height: 50px;
    border-bottom: 3px solid transparent;
}
.apps svg{
    width: 30px;
    height: 30px;
}
.apps text{
    font-size: 13px;
    font-weight: bold;
    fill: #fff;
    text-anchor: middle;
}
.apps .pc{
    font-size: 11px;
}
.apps .ty{
    font-family: "Liberation Serif", serif;
    font-size: 22px;
    fill: #333;
}
.apps .open::after{
    content: "";
    position: absolute;
    left: 5px;
    right: 5px;
    bottom: -3px;
    height: 3px;
    background-color: #00b294;
}
.apps .more::after{
    background: linear-gradient(to right, #00b294 76%, #62ceba 76%);
}
.apps .active{
    width: 50px;
    background-color: #f7f4f0;
}
.apps .active::after{
    left: 0;
    right: 0;
}
.power{
    display: flex;
    align-items: center;
    margin-left: 9px;
}
.percent{
    width: 44px;
    border: 2px solid #fff;
    outline: 1px solid #888;
    background-color: #168f3c;
    font-size: 13px;
    line-height: 18px;
    text-align: center;
    color: #fff;
}
.weather{
    display: flex;
    align-items: center;
    gap: 11px;
    margin-left: 26px;
    font-size: 18px;
}
.tray{
    display: flex;
    align-items: center;
    gap: 13px;
    margin-left: auto;
}
.lang{
    margin-left: 13px;
    font-size: 20px;
    font-weight: 500;
}
.ime{
    width: 20px;
    margin-left: 17px;
    border: 1px solid #000;
    font-size: 16px;
    line-height: 18px;
    text-align: center;
}
.clock{
    display: flex;
    flex-direction: column;
    width: 76px;
    margin-left: 22px;
    font-size: 15px;
    line-height: 23px;
    text-align: center;
}
.notice{
    margin: 0 22px 0 24px;
}
.notice text{
    font-size: 14px;
    text-anchor: middle;
}
.watermark{
    position: absolute;
    right: 16px;
    bottom: 5px;
    font-size: 20px;
    line-height: 28px;
    color: rgba(255,255,255,.75);
    text-shadow: 1px 1px 1px rgba(0,0,0,.5);
}
```
FILE: charts.js
```js
var months = ["1月","2月","3月","4月","5月","6月","7月","8月","9月","10月","11月","12月"];
var colors = ["#5470c6","#91cc75","#fac858","#ee6666"];
var lineColors = ["#5c7bd9","#9fe080","#ffdc60","#ff7070"];

function tag(name, attrs, text){
  var s = "<" + name;
  for(var k in attrs){
    s += " " + k + '="' + attrs[k] + '"';
  }
  return s + ">" + (text === undefined ? "" : text) + "</" + name + ">";
}

// 坐标轴、刻度、网格线
function drawAxis(o){
  var s = "";
  var i, y, x;
  for(i=0;i<=o.max;i+=o.step){
    y = Math.round(toY(o,i));
    if(i>0){
      s += tag("path",{d:"M"+o.left+" "+(y+0.5)+"H"+o.right,stroke:"#e0e6f1"});
    }
    s += tag("text",{x:o.left-10,y:y+5,"class":"y"},i.toLocaleString("en-US"));
  }
  var band = (o.right-o.left)/o.names.length;
  for(i=0;i<=o.names.length;i++){
    x = Math.round(o.left+band*i)+0.5;
    s += tag("path",{d:"M"+x+" "+o.bottom+"v6",stroke:"#6e7079"});
    if(i<o.names.length){
      s += tag("text",{x:o.left+band*(i+0.5),y:o.bottom+22},o.names[i]);
    }
  }
  s += tag("path",{d:"M"+(o.left+0.5)+" "+o.top+"V"+o.bottom+"M"+o.left+" "+(o.bottom+0.5)+"H"+o.right,stroke:"#6e7079"});
  s += tag("path",{d:"M"+(o.left+0.5)+" "+o.top+"l8 19-8-5-8 5z",fill:"#6e7079"});
  s += tag("text",{x:o.left,y:o.top-22},o.unit);
  return s;
}
function toY(o,v){
  return o.bottom-(o.bottom-o.top)*v/o.max;
}
function drawLine(o,data,base,color,lineColor,width,active){
  var band = (o.right-o.left)/data.length;
  var pts = "", dots = "", labels = "";
  for(var i=0;i<data.length;i++){
    var x = o.left+band*(i+0.5);
    var y = toY(o,base[i]+data[i]);
    pts += x+","+y+" ";
    dots += tag("circle",{cx:x,cy:y,r:i===active?4:2.8,fill:"#fff",stroke:color,"stroke-width":2});
    labels += tag("text",{x:x,y:y-13,"class":"val"},data[i]);
    base[i] += data[i];
  }
  return tag("polyline",{points:pts,fill:"none",stroke:lineColor,"stroke-width":width})+dots+labels;
}
function mount(id,s){
  document.getElementById(id).insertAdjacentHTML("afterbegin",'<svg viewBox="0 0 819 357">'+s+"</svg>");
}

// 房价走势
var trend = {left:92,right:728,top:43,bottom:257,max:18000,step:3000,names:months,unit:"元"};
var zero = months.map(function(){ return 0; });
mount("trend", drawAxis(trend) + drawLine(trend,
  [13956,14113,14588,14650,14678,14863,14972,15028,15043,14995,14978,15128],
  zero, colors[0], colors[0], 2.5, -1));

// 各区房价，堆叠
var compare = {left:94,right:776,top:44,bottom:309,max:80000,step:20000,names:months,unit:"元"};
var prices = [
  [16557,16455,16475,16460,16675,16890,16932,16980,17037,17117,17288,18423],
  [20013,19727,19637,19367,19473,20010,20086,20107,20305,20001,19925,19456],
  [18155,18262,18118,18175,17994,18165,18303,18195,18457,18307,18441,19990],
  [16542,16467,16302,16368,16664,17445,17094,16931,17178,16503,16355,17430]
];
var base = months.map(function(){ return 0; });
var active = 4;
var pointerX = compare.left+(compare.right-compare.left)/months.length*(active+0.5);
var html = drawAxis(compare);
for(var i=0;i<prices.length;i++){
  html += drawLine(compare,prices[i],base,colors[i],lineColors[i],4,active);
}
html += tag("path",{d:"M"+pointerX+" "+compare.top+"V"+compare.bottom,stroke:"#b0b3bd","stroke-opacity":0.7,"stroke-width":1.5,"stroke-dasharray":"5 4"});
mount("compare", html);

// 公共资源
var resource = {left:74,right:776,top:44,bottom:309,max:150,step:30,names:["学校","医院","政府","商场"],unit:"个"};
var counts = [[90,68,65,91],[53,59,92,96],[132,121,122,129],[32,14,22,31]];
html = drawAxis(resource);
var group = (resource.right-resource.left)/counts.length;
for(i=0;i<counts.length;i++){
  for(var j=0;j<counts[i].length;j++){
    var bx = resource.left+group*i+16+37*j;
    var by = toY(resource,counts[i][j]);
    html += tag("rect",{x:bx,y:by,width:31,height:resource.bottom-by,fill:colors[j]});
    html += tag("text",{x:bx+15,y:by-9,"class":"val"},counts[i][j]);
  }
}
mount("resource", html);
```
